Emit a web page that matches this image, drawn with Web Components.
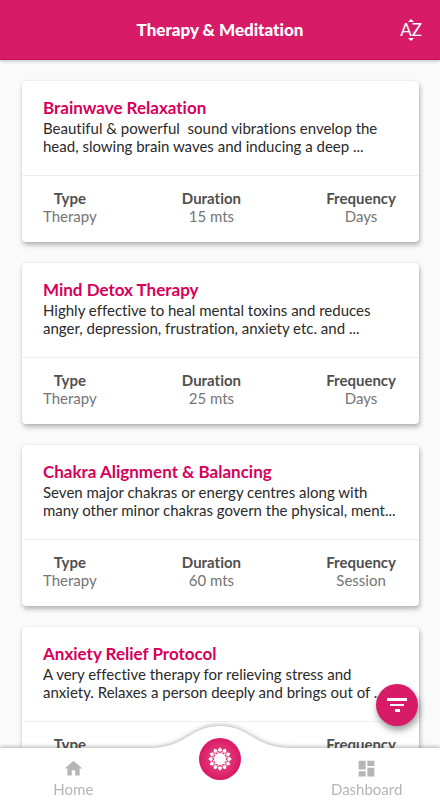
<!DOCTYPE html>
<html lang="en">
<head>
<meta charset="utf-8">
<meta name="viewport" content="width=device-width, initial-scale=1">
<title>Therapy &amp; Meditation</title>
<style>
html, body {
  margin: 0;
  height: 100%;
}

body {
  font-family: Lato, "Liberation Sans", sans-serif;
  font-variant-ligatures: none;
  background: #fafafa;
  --pink: #d81b66;
  --title: #d6005a;
}
</style>
</head>
<body>

<therapy-app>
  <app-header slot="header">Therapy &amp; Meditation</app-header>

  <therapy-card type="Therapy" duration="15 mts" frequency="Days">
    <span slot="title">Brainwave Relaxation</span>
    Beautiful &amp; powerful&nbsp; sound vibrations envelop the head, slowing brain waves and inducing a deep ...
  </therapy-card>
  <therapy-card type="Therapy" duration="25 mts" frequency="Days">
    <span slot="title">Mind Detox Therapy</span>
    Highly effective to heal mental toxins and reduces anger, depression, frustration, anxiety etc. and ...
  </therapy-card>
  <therapy-card type="Therapy" duration="60 mts" frequency="Session">
    <span slot="title">Chakra Alignment &amp; Balancing</span>
    Seven major chakras or energy centres along with many other minor chakras govern the physical, ment...
  </therapy-card>
  <therapy-card type="Therapy" duration="30 mts" frequency="Days">
    <span slot="title">Anxiety Relief Protocol</span>
    A very effective therapy for relieving stress and anxiety. Relaxes a person deeply and brings out of ...
  </therapy-card>

  <filter-button slot="fab"></filter-button>

  <bottom-nav slot="nav">
    <nav-item slot="left" href="#home">
      <svg slot="icon" width="21" height="21" viewBox="0 0 24 24" fill="currentColor"><path d="M10 20v-6h4v6h5v-8h3L12 3 2 12h3v8z"/></svg>
      Home
    </nav-item>
    <nav-item slot="right" href="#dashboard">
      <svg slot="icon" width="21" height="21" viewBox="0 0 24 24" fill="currentColor"><path d="M3 13h8V3H3v10zm0 8h8v-6H3v6zm10 0h8V11h-8v10zm0-18v6h8V3h-8z"/></svg>
      Dashboard
    </nav-item>
  </bottom-nav>
</therapy-app>

<script>
function makeTemplate(html) {
  const template = document.createElement('template');
  template.innerHTML = html;
  return template;
}

// App shell: header, scrolling list, bottom bar
const appTemplate = makeTemplate(`
<style>
:host {
  display: grid;
  grid-template-rows: auto 1fr auto;
  height: 100vh;
  position: relative;
  overflow: hidden;
}
main {
  display: flex;
  flex-direction: column;
  gap: 21px;
  padding: 21px;
  padding-left: 22px;
  min-height: 0;
  overflow-y: auto;
  scrollbar-width: none;
}
.fab {
  position: absolute;
  right: 22px;
  bottom: 74px;
}
</style>
<slot name="header"></slot>
<main><slot></slot></main>
<div class="fab"><slot name="fab"></slot></div>
<slot name="nav"></slot>`);

class TherapyApp extends HTMLElement {
  constructor() {
    super();
    this.attachShadow({ mode: 'open' });
    this.shadowRoot.appendChild(appTemplate.content.cloneNode(true));
  }
}

const headerTemplate = makeTemplate(`
<style>
:host { display: block; position: relative; z-index: 1; }
header {
  display: grid;
  grid-template-columns: 1fr auto 1fr;
  align-items: center;
  height: 60px;
  padding: 0 18px;
  box-sizing: border-box;
  background: var(--pink);
  border-bottom: 1px solid #c90f58;
  box-shadow: 0 1px 4px rgba(0, 0, 0, .25);
  color: #fff;
}
h1 {
  grid-column: 2;
  margin: 0;
  font-size: 17px;
  line-height: 22px;
  font-weight: 900;
}
button {
  justify-self: end;
  display: flex;
  flex-direction: column;
  align-items: center;
  padding: 0;
  border: 0;
  background: none;
  color: inherit;
  font: 17px/16px Lato, sans-serif;
  font-kerning: none;
}
svg { display: block; fill: currentColor; }
</style>
<header>
  <h1><slot></slot></h1>
  <button type="button">
    <svg width="6" height="3" viewBox="0 0 6 3"><path d="M0 3 3 0l3 3z"/></svg>
    <span>AZ</span>
    <svg width="6" height="3" viewBox="0 0 6 3"><path d="M0 0h6L3 3z"/></svg>
  </button>
</header>`);

class AppHeader extends HTMLElement {
  constructor() {
    super();
    this.attachShadow({ mode: 'open' });
    this.shadowRoot.appendChild(headerTemplate.content.cloneNode(true));
  }
}

const cardTemplate = makeTemplate(`
<style>
:host { display: block; flex: none; }
article {
  background: #fff;
  border-radius: 4px;
  box-shadow: 1px 3px 5px rgba(0, 0, 0, .28), 0 0 2px rgba(0, 0, 0, .1);
}
.top {
  padding: 16px 21px 20px;
  border-bottom: 1px solid #eee;
}
h2 {
  margin: 0;
  color: var(--title);
  font-size: 17px;
  line-height: 22px;
  font-weight: 700;
}
p {
  margin: 0;
  color: #2a2a2a;
  font-size: 15px;
  line-height: 18px;
}
dl {
  display: flex;
  justify-content: space-between;
  margin: 0;
  padding: 13px 23px 17px 21px;
  font-size: 15px;
  line-height: 18px;
  text-align: center;
}
dt { color: #505050; font-weight: 700; }
dd { margin: 0; color: #757575; }
</style>
<article>
  <div class="top">
    <h2><slot name="title"></slot></h2>
    <p><slot></slot></p>
  </div>
  <dl>
    <div><dt>Type</dt><dd id="type"></dd></div>
    <div><dt>Duration</dt><dd id="duration"></dd></div>
    <div><dt>Frequency</dt><dd id="frequency"></dd></div>
  </dl>
</article>`);

class TherapyCard extends HTMLElement {
  constructor() {
    super();
    this.attachShadow({ mode: 'open' });
    this.shadowRoot.appendChild(cardTemplate.content.cloneNode(true));
  }

  connectedCallback() {
    ['type', 'duration', 'frequency'].forEach((name) => {
      this.shadowRoot.getElementById(name).textContent = this.getAttribute(name);
    });
  }
}

const filterTemplate = makeTemplate(`
<style>
:host { display: block; }
button {
  display: grid;
  place-items: center;
  width: 42px;
  height: 42px;
  padding: 0;
  border: 0;
  border-radius: 50%;
  background: var(--pink);
  box-shadow: 1px 4px 7px rgba(0, 0, 0, .4);
}
</style>
<button type="button" aria-label="Filter">
  <svg width="20" height="14" viewBox="0 0 20 14" fill="#fff"><path d="M0 0h20v3H0zM3 6h14v2H3zM8 11h5v3H8z"/></svg>
</button>`);

class FilterButton extends HTMLElement {
  constructor() {
    super();
    this.attachShadow({ mode: 'open' });
    this.shadowRoot.appendChild(filterTemplate.content.cloneNode(true));
  }
}

const itemTemplate = makeTemplate(`
<style>
:host { display: block; }
a {
  display: flex;
  flex-direction: column;
  align-items: center;
  gap: 1px;
  color: #b5b5b5;
  font-size: 15px;
  line-height: 18px;
  text-decoration: none;
}
</style>
<a><slot name="icon"></slot><span><slot></slot></span></a>`);

class NavItem extends HTMLElement {
  constructor() {
    super();
    this.attachShadow({ mode: 'open' });
    this.shadowRoot.appendChild(itemTemplate.content.cloneNode(true));
  }

  connectedCallback() {
    this.shadowRoot.querySelector('a').href = this.getAttribute('href');
  }
}

const navTemplate = makeTemplate(`
<style>
:host { display: block; position: relative; filter: drop-shadow(0 -1px 2px rgba(0, 0, 0, .3)); }
nav {
  display: grid;
  grid-template-columns: 1fr 1fr 1fr;
  height: 52px;
  padding-top: 10px;
  box-sizing: border-box;
  background: #fff;
}
/* hump that rises over the list */
.hump {
  position: absolute;
  left: 50%;
  bottom: 51px;
  margin-left: -70px;
}
.center {
  position: absolute;
  left: 50%;
  bottom: 20px;
  margin-left: -21px;
  width: 42px;
  height: 42px;
  padding: 0;
  border: 0;
  border-radius: 50%;
  background: radial-gradient(circle, #e8507f 0, #de2a70 50%, #d81460 75%);
}
.center svg { display: block; }
.right { grid-column: 3; }
</style>
<svg class="hump" width="140" height="24" viewBox="0 0 140 24"><path d="M0 24V23C36 23 40 1 70 1S104 23 140 23v1z" fill="#fff"/></svg>
<nav>
  <slot name="left"></slot>
  <div class="right"><slot name="right"></slot></div>
</nav>
<button class="center" type="button" aria-label="Chakra">
  <svg width="42" height="42" viewBox="-21 -21 42 42">
    <g id="petals" fill="#fff"></g>
    <circle r="6" fill="#fff"/>
    <g id="ring" fill="none" stroke="#fff" stroke-width=".6"></g>
  </svg>
</button>`);

class BottomNav extends HTMLElement {
  constructor() {
    super();
    this.attachShadow({ mode: 'open' });
    this.shadowRoot.appendChild(navTemplate.content.cloneNode(true));

    let petals = '';
    let ring = '';
    for (let i = 0; i < 12; i++) {
      const angle = i * 30;
      petals += `<path transform="rotate(${angle})" d="M0 -8C-1.200 -7.700 -2.300 -8.300 -2 -9.200C-1.700 -10.200 -.7 -10.500 0 -12C.7 -10.500 1.700 -10.200 2 -9.200C2.300 -8.300 1.200 -7.700 0 -8z"/>`;
      ring += `<path transform="rotate(${angle})" d="M-2 -5.800Q-1.600 -7.400 0 -8Q1.600 -7.400 2 -5.800"/>`;
    }
    this.shadowRoot.getElementById('petals').innerHTML = petals;
    this.shadowRoot.getElementById('ring').innerHTML = ring;
  }
}

window.customElements.define('therapy-app', TherapyApp);
window.customElements.define('app-header', AppHeader);
window.customElements.define('therapy-card', TherapyCard);
window.customElements.define('filter-button', FilterButton);
window.customElements.define('nav-item', NavItem);
window.customElements.define('bottom-nav', BottomNav);
</script>
</body>
</html>
